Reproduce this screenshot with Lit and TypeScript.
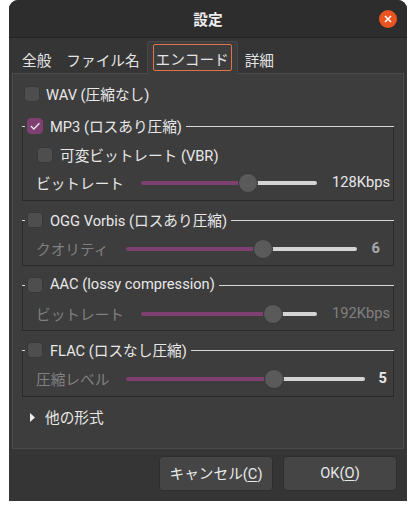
import { LitElement, html, css, nothing } from "lit";
import { customElement, property } from "lit/decorators.js";

@customElement("x-check")
class XCheck extends LitElement {
  @property({ type: Boolean }) checked = false;
  static styles = css`
    :host { display: block; width: 16px; height: 16px; flex: none; }
    .b { width: 16px; height: 16px; box-sizing: border-box; border-radius: 4px; background: #4e4e4e; border: 1px solid #383838; display: flex; align-items: center; justify-content: center; }
    .b.on { background: #7e4070; border-color: #7e4070; }
    svg { width: 12px; height: 12px; }
  `;
  render() {
    return html`<div class="b ${this.checked ? "on" : ""}">
      ${this.checked ? html`<svg viewBox="0 0 12 12"><path d="M1.8 6 L4.8 9 L10.4 3.2" fill="none" stroke="#f0e8ee" stroke-width="1.3"/></svg>` : nothing}
    </div>`;
  }
}

@customElement("x-slider")
class XSlider extends LitElement {
  @property({ type: Number }) width = 176;
  @property({ type: Number }) pos = 100;
  static styles = css`
    :host { display: block; }
    .s { display: flex; align-items: center; height: 20px; }
    .a { height: 4px; background: #7e4070; border-radius: 2px 0 0 2px; margin-right: -1px; }
    .b { flex: 1; height: 4px; background: #d4d4d4; border-radius: 0 2px 2px 0; margin-left: -1px; }
    .t { width: 20px; height: 20px; box-sizing: border-box; border-radius: 50%; background: #5a5a5a; border: 1px solid #383838; flex: none; position: relative; z-index: 1; }
  `;
  render() {
    return html`<div class="s" style="width:${this.width}px">
      <div class="a" style="width:${this.pos - 9}px"></div>
      <div class="t"></div>
      <div class="b"></div>
    </div>`;
  }
}

@customElement("app-root")
class AppRoot extends LitElement {
  static styles = css`
    :host { display: block; width: 416px; height: 510px; background: #fff; font-family: Roboto, "Noto Sans CJK JP", sans-serif; font-size: 14.67px; color: #e8e8e8; overflow: hidden; }
    .win { margin: 0 9px; width: 398px; height: 501px; background: #353535; border-radius: 9px 9px 0 0; display: flex; flex-direction: column; }
    .head { height: 37px; flex: none; background: #2d2d2d; border-bottom: 1px solid #222; border-radius: 9px 9px 0 0; display: flex; align-items: center; justify-content: center; position: relative; }
    .title { font-weight: 700; color: #eee; }
    .close { position: absolute; right: 10px; top: 10px; width: 18px; height: 18px; border-radius: 50%; background: #e95420; display: flex; align-items: center; justify-content: center; }
    .close svg { width: 10px; height: 10px; }
    .tabs { height: 35px; flex: none; display: flex; align-items: flex-end; padding-left: 3px; }
    .tab { height: 27px; display: flex; align-items: center; padding: 0 7px 0 10px; color: #e4e4e4; white-space: nowrap; }
    .tab.file { padding: 0 7px 0 8px; }
    .tab.active { height: 33px; margin-bottom: -1px; background: #3d3d3d; border: 1px solid #484848; border-bottom: none; border-radius: 3px 3px 0 0; box-sizing: border-box; padding: 2px 5px 3px 5px; width: 91px; position: relative; z-index: 1; }
    .focus { border: 1px solid #e0734a; border-radius: 2px; height: 27px; width: 79px; padding-top: 2px; box-sizing: border-box; display: flex; align-items: center; justify-content: center; white-space: nowrap; }
    .tab.last { padding-left: 7px; }
    .page { height: 376px; flex: none; margin: 0 3px; box-sizing: border-box; background: #3d3d3d; border: 1px solid #4a4a4a; padding: 10px 9px 0 9px; display: flex; flex-direction: column; }
    .row { display: flex; align-items: center; }
    .row span, .lab, .name, .val, .btn span, .exp span { padding-bottom: 2px; }
    .wav { gap: 6px; padding-left: 2px; height: 20px; margin-bottom: 3px; }
    .frame { margin-top: 10px; }
    .fh { display: flex; align-items: center; height: 18px; position: relative; z-index: 1; }
    .fh .tick { width: 3px; height: 1px; background: #d8d8d8; margin-right: 2px; }
    .fh .lab { margin-left: 7px; margin-right: 4px; white-space: nowrap; }
    .fh .line { flex: 1; height: 1px; background: #d8d8d8; }
    .body { margin-top: -9px; border: 1px solid #2a2a2a; border-top: none; padding: 19px 3px 0 13px; box-sizing: border-box; }
    .vbr { gap: 7px; height: 20px; margin-left: 1px; margin-bottom: 8px; }
    .ctl { display: flex; align-items: center; height: 20px; }
    .ctl .name { flex: none; white-space: nowrap; }
    .ctl x-slider { flex: none; }
    .ctl .val { flex: 1; text-align: right; white-space: nowrap; }
    .dim { color: #808080; }
    .mid { color: #a8a8a8; font-weight: 700; }
    .bright { color: #e8e8e8; font-weight: 700; }
    .exp { display: flex; align-items: center; margin-top: 10px; padding-left: 8px; gap: 10px; height: 20px; }
    .exp svg { width: 5px; height: 9px; }
    .foot { flex: 1; display: flex; justify-content: flex-end; gap: 10px; padding: 7px 10px 0 0; }
    .btn { width: 114px; height: 35px; box-sizing: border-box; background: #454545; border: 1px solid #2e2e2e; border-radius: 4px; display: flex; align-items: center; justify-content: center; color: #e8e8e8; white-space: nowrap; }
    u { text-underline-offset: 2px; }
  `;
  ctl(name: string, val: string, w: number, pos: number, nameW: number, dim: boolean, valClass: string, valPad: number) {
    return html`<div class="ctl">
      <span class="name ${dim ? "dim" : ""}" style="width:${nameW}px">${name}</span>
      <x-slider .width=${w} .pos=${pos}></x-slider>
      <span class="val ${valClass}" style="padding-right:${valPad}px">${val}</span>
    </div>`;
  }
  frame(label: string, checked: boolean, content: unknown, bodyH: number) {
    return html`<div class="frame">
      <div class="fh"><span class="tick"></span><x-check ?checked=${checked}></x-check><span class="lab">${label}</span><span class="line"></span></div>
      <div class="body" style="height:${bodyH}px">${content}</div>
    </div>`;
  }
  render() {
    return html`<div class="win">
      <div class="head">
        <span class="title">設定</span>
        <div class="close"><svg viewBox="0 0 10 10"><path d="M2 2 L8 8 M8 2 L2 8" stroke="#fff" stroke-width="1.6"/></svg></div>
      </div>
      <div class="tabs">
        <div class="tab">全般</div>
        <div class="tab file">ファイル名</div>
        <div class="tab active"><div class="focus">エンコード</div></div>
        <div class="tab last">詳細</div>
      </div>
      <div class="page">
        <div class="row wav"><x-check></x-check><span>WAV (圧縮なし)</span></div>
        ${this.frame("MP3 (ロスあり圧縮)", true, html`
          <div class="row vbr"><x-check></x-check><span>可変ビットレート (VBR)</span></div>
          ${this.ctl("ビットレート", "128Kbps", 176, 107, 105, false, "", 0)}
        `, 75)}
        ${this.frame("OGG Vorbis (ロスあり圧縮)", false, this.ctl("クオリティ", "6", 231, 137, 90, true, "mid", 10), 46)}
        ${this.frame("AAC (lossy compression)", false, this.ctl("ビットレート", "192Kbps", 176, 132, 105, true, "dim", 0), 46)}
        ${this.frame("FLAC (ロスなし圧縮)", false, this.ctl("圧縮レベル", "5", 239, 148, 90, true, "bright", 3), 47)}
        <div class="exp"><svg viewBox="0 0 5 9"><path d="M0 0 L5 4.5 L0 9 Z" fill="#eee"/></svg><span>他の形式</span></div>
      </div>
      <div class="foot">
        <div class="btn"><span>キャンセル(<u>C</u>)</span></div>
        <div class="btn"><span>OK(<u>O</u>)</span></div>
      </div>
    </div>`;
  }
}
